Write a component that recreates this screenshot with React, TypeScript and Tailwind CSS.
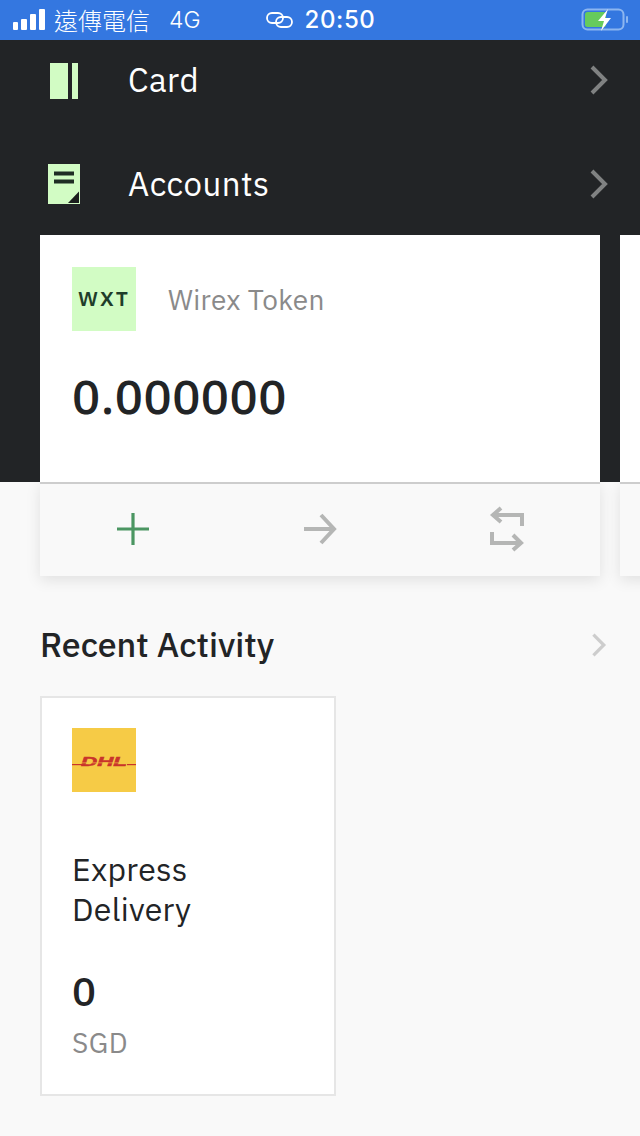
import { ReactNode } from "react";

const font = "font-['IBM_Plex_Sans','Noto_Sans',sans-serif]";

function CardIcon() {
  return (
    <svg width="30" height="36" viewBox="0 0 30 36" className="block">
      <rect x="0" y="0" width="18" height="36" fill="#d2fcc4" />
      <rect x="22" y="0" width="6" height="36" fill="#d2fcc4" />
    </svg>
  );
}

function AccountsIcon() {
  return (
    <svg width="32" height="40" viewBox="0 0 32 40" className="block">
      <rect x="0" y="0" width="32" height="40" fill="#d2fcc4" />
      <rect x="6" y="7.5" width="20" height="4" fill="#1f2d24" />
      <rect x="6" y="15.5" width="20" height="4" fill="#1f2d24" />
      <path d="M20 39 L31 27.5 V39 Z" fill="#1a1d1c" />
    </svg>
  );
}

function Chevron({ color, size = 20 }: { color: string; size?: number }) {
  return (
    <svg width={size} height={size * 1.5} viewBox="0 0 20 30" fill="none">
      <path d="M3 2 L16 15 L3 28" stroke={color} strokeWidth="4" />
    </svg>
  );
}

function MenuRow({ icon, label, iconBox }: { icon: ReactNode; label: string; iconBox: string }) {
  return (
    <div className="flex h-[104px] items-center pr-[31px]">
      <div className={iconBox}>{icon}</div>
      <span className="flex-1 pb-[2px] text-[33px] leading-none tracking-[0.5px] text-white">{label}</span>
      <Chevron color="#808282" />
    </div>
  );
}

function ActionIcon({ children }: { children: ReactNode }) {
  return (
    <div className="flex flex-1 items-center justify-center pb-[2px]">
      <svg width="36" height="46" viewBox="0 0 36 46" fill="none">
        {children}
      </svg>
    </div>
  );
}

export default function App() {
  return (
    <div className={`flex h-[1136px] w-[640px] flex-col overflow-hidden bg-[#f9f9f9] ${font}`}>
      {/* status bar */}
      <div className="flex h-10 shrink-0 items-center bg-[#3477e0] text-white">
        <div className="ml-[13px] flex items-end gap-[3px] pb-[1px]">
          <div className="h-[8px] w-[5px] rounded-[1px] bg-white" />
          <div className="h-[11px] w-[6px] rounded-[1px] bg-white" />
          <div className="h-[16px] w-[6px] rounded-[1px] bg-white" />
          <div className="h-[21px] w-[6px] rounded-[1px] bg-white" />
        </div>
        <span className="ml-[9px] font-['Noto_Sans_CJK_TC',sans-serif] text-[24px] leading-none font-light">遠傳電信</span>
        <span className="ml-[19px] font-['Inter',sans-serif] text-[23px] leading-none font-light">4G</span>
        <svg width="28" height="18" viewBox="0 0 28 18" fill="none" className="ml-[65px]">
          <rect x="1" y="2" width="16" height="10" rx="5" stroke="white" strokeWidth="1.8" />
          <rect x="10" y="6" width="16" height="10" rx="5" stroke="white" strokeWidth="1.8" />
        </svg>
        <span className="ml-[11px] font-['Inter',sans-serif] text-[24px] leading-none font-medium tracking-[0.6px]">20:50</span>
        <div className="mr-[11px] ml-auto flex items-center">
          <svg width="48" height="24" viewBox="0 0 48 24" fill="none">
            <rect x="1.5" y="1.5" width="41" height="20" rx="5" stroke="#8cb6f0" strokeWidth="2" />
            <rect x="4" y="4" width="21" height="15" rx="2.5" fill="#66cb5c" />
            <rect x="45" y="8" width="2" height="7" rx="1" fill="#8cb6f0" />
            <path d="M27 1 L17 13 H23 L20 23 L30 10 H24 Z" fill="white" />
          </svg>
        </div>
      </div>

      {/* dark header with menu and card tops */}
      <div className="h-[442px] shrink-0 overflow-hidden bg-[#222426]">
        <div className="-mt-3 pl-[50px]">
          <MenuRow icon={<CardIcon />} label="Card" iconBox="w-[78px] pt-[2px]" />
          <div className="-ml-[2px]">
            <MenuRow icon={<AccountsIcon />} label="Accounts" iconBox="w-[80px]" />
          </div>
        </div>
        <div className="mt-[-1px] flex gap-5 pl-10">
          <div className="h-[247px] w-[560px] shrink-0 bg-white px-8 pt-8">
            <div className="flex items-center">
              <div className="flex size-16 items-center justify-center bg-[#d2fcc4] text-[21px] font-semibold tracking-[2px] text-[#1f3d2a]">
                WXT
              </div>
              <span className="ml-8 pt-[2px] text-[28px] tracking-[0.3px] text-[#8a8a8a]">Wirex Token</span>
            </div>
            <div className="mt-[42px] text-[47px] leading-none font-medium tracking-[0.5px] text-[#222426]">0.000000</div>
          </div>
          <div className="h-[247px] w-[560px] shrink-0 bg-white" />
        </div>
      </div>

      {/* card actions */}
      <div className="flex shrink-0 gap-5 overflow-hidden pb-4 pl-10">
        <div className="flex h-[94px] w-[560px] shrink-0 border-t-2 border-[#cdcdcd] bg-[#f9f9f9] shadow-[0_4px_14px_rgba(0,0,0,0.1)]">
          <ActionIcon>
            <path d="M2 23 H34 M18 7 V39" stroke="#4b9662" strokeWidth="3.2" />
          </ActionIcon>
          <ActionIcon>
            <path d="M2 23 H32 M19 9 L32 23 L19 37" stroke="#b5b6b5" strokeWidth="4" />
          </ActionIcon>
          <ActionIcon>
            <path
              d="M33 20 V9 H4 M12 2 L4 9 L12 16 M3 26 V37 H32 M24 29 L32 37 L24 44"
              stroke="#b5b6b5"
              strokeWidth="4"
            />
          </ActionIcon>
        </div>
        <div className="h-[94px] w-[560px] shrink-0 border-t-2 border-[#cdcdcd] bg-[#f9f9f9] shadow-[0_4px_14px_rgba(0,0,0,0.1)]" />
      </div>

      {/* recent activity */}
      <div className="flex items-center pt-[28px] pr-[33px] pl-[40px]">
        <span className="flex-1 pb-[2px] text-[34px] leading-[48px] font-medium text-[#222426]">Recent Activity</span>
        <Chevron color="#cdcdcd" size={16} />
      </div>
      <div className="mt-[26px] ml-10 h-[400px] w-[296px] border-2 border-[#e6e6e6] bg-white px-[30px] pt-[30px]">
        <div className="flex size-16 items-center justify-center bg-[#f6cb46]">
          <svg width="64" height="20" viewBox="0 0 64 20">
            <rect x="0" y="14" width="10" height="1.2" fill="#c9342b" />
            <rect x="55" y="14" width="9" height="1.2" fill="#c9342b" />
            <text x="9" y="16" textLength="46" lengthAdjust="spacingAndGlyphs" fontFamily="Liberation Sans" fontWeight="700" fontStyle="italic" fontSize="12" stroke="#c9342b" strokeWidth="0.5" fill="#c9342b">DHL</text>
            <rect x="9" y="12.6" width="46" height="0.6" fill="#f6cb46" />
          </svg>
        </div>
        <div className="mt-[57px] text-[32px] leading-10 tracking-[0.3px] text-[#222426]">
          Express
          <br />
          Delivery
        </div>
        <div className="mt-[38px] text-[40px] leading-[48px] font-medium text-[#222426]">0</div>
        <div className="mt-[12px] text-[28px] leading-8 tracking-[0.5px] text-[#8a8a8a]">SGD</div>
      </div>
    </div>
  );
}
